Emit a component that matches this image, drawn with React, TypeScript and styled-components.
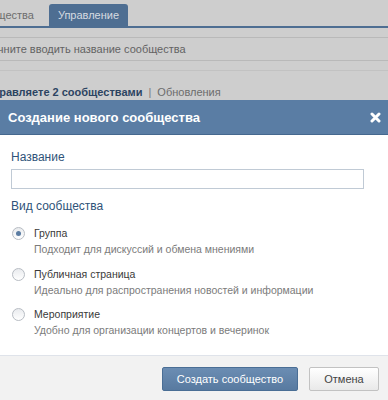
import React from "react";
import styled, { createGlobalStyle } from "styled-components";

const GlobalStyle = createGlobalStyle`
  html, body {
    margin: 0;
    padding: 0;
    background: #cecece;
  }
  body {
    font-family: "Liberation Sans", Arial, sans-serif;
    width: 388px;
    height: 400px;
    overflow: hidden;
  }
`;

const Screen = styled.div`
  display: flex;
  flex-direction: column;
  width: 388px;
  height: 400px;
  overflow: hidden;
  background: #cecece;
`;

// dimmed page that lies under the box, scrolled a bit to the left
const Backdrop = styled.div`
  display: flex;
  flex-direction: column;
  height: 100px;
  overflow: hidden;
  flex-shrink: 0;
`;

const Tabs = styled.div`
  display: flex;
  align-items: flex-end;
  height: 22px;
  padding: 4px 0 0 0;
  border-bottom: 2px solid #4e6e92;
`;

const Tab = styled.div<{ $active?: boolean; $shift?: number }>`
  display: flex;
  align-items: center;
  height: 100%;
  padding: 0 9px;
  margin-left: ${p => p.$shift ?? 0}px;
  white-space: nowrap;

  font-size: 11px;
  color: ${p => (p.$active ? "#d6dbe1" : "#6d6d6d")};
  border-radius: 3px 3px 0 0;
  background: ${p => (p.$active ? "#4e6e92" : "transparent")};
`;

const SearchRow = styled.div`
  display: flex;
  align-items: center;
  height: 22px;
  margin-top: 9px;

  font-size: 11px;
  color: #636363;
  white-space: nowrap;
  border-top: 1px solid #b9b9b9;
  border-bottom: 1px solid #b9b9b9;

  span {
    margin-left: -16px;
  }
`;

const Divider = styled.div`
  height: 9px;
  border-bottom: 1px solid #c2c2c2;
`;

const Summary = styled.div`
  display: flex;
  align-items: center;
  gap: 6px;
  margin: 15px 0 0 -34px;
  white-space: nowrap;

  font-size: 11px;
  color: #6c6c6c;

  b {
    color: #2c4461;
  }
`;

const Sep = styled.span`
  color: #7a7a7a;
`;

const Modal = styled.div`
  display: flex;
  flex-direction: column;
  flex: 1;
  background: #fff;
`;

const ModalHeader = styled.div`
  display: flex;
  align-items: center;
  justify-content: space-between;
  height: 34px;
  padding: 0 7px 0 8px;

  background: #5a7da4;
  border-bottom: 1px solid #45688e;
`;

const ModalTitle = styled.div`
  font-size: 13px;
  font-weight: 700;
  color: #fff;
`;

const Close = styled.div`
  display: flex;
  align-items: center;
  justify-content: center;
  width: 12px;
  height: 12px;
  cursor: pointer;
`;

const ModalBody = styled.div`
  display: flex;
  flex-direction: column;
  flex: 1;
  padding: 15px 24px 0 11px;
`;

const FieldLabel = styled.div<{ $top?: number }>`
  margin-top: ${p => p.$top ?? 0}px;
  font-size: 12px;
  color: #2f5379;
`;

const TextInput = styled.input`
  box-sizing: border-box;
  width: 353px;
  height: 20px;
  margin-top: 5px;
  padding: 2px 4px;

  border: 1px solid #c0cad5;
  outline: none;
  font-family: inherit;
  font-size: 11px;
`;

const Options = styled.div`
  display: flex;
  flex-direction: column;
  gap: 10.5px;
  margin-top: 13px;
`;

const Option = styled.label`
  display: grid;
  grid-template-columns: 14px 1fr;
  column-gap: 8px;
  row-gap: 3px;
  padding-left: 1px;
  cursor: pointer;
`;

const Radio = styled.span<{ $checked?: boolean }>`
  display: flex;
  align-items: center;
  justify-content: center;
  box-sizing: border-box;
  width: 13px;
  height: 13px;
  margin-top: 1px;

  border: 1px solid #b7bcc3;
  border-radius: 50%;
  background: linear-gradient(#e9ebee, #ffffff);

  &::after {
    content: "";
    display: ${p => (p.$checked ? "block" : "none")};
    width: 5px;
    height: 5px;
    border-radius: 50%;
    background: #5b7ca2;
  }
`;

const OptionTitle = styled.div`
  font-size: 10.5px;
  line-height: 14px;
  color: #3a3a3a;
`;

const OptionDesc = styled.div`
  grid-column: 2;
  font-size: 10.5px;
  line-height: 13px;
  color: #7b7b7b;
`;

const Footer = styled.div`
  display: flex;
  justify-content: flex-end;
  gap: 11px;
  height: 45px;
  padding: 11px 9px 0 0;
  box-sizing: border-box;

  background: #f2f2f2;
  border-top: 1px solid #dfe3ea;
`;

const Button = styled.button<{ $primary?: boolean }>`
  box-sizing: border-box;
  width: ${p => (p.$primary ? "136px" : "70px")};
  height: 24px;
  padding: 0;

  font-family: inherit;
  font-size: 11px;
  color: ${p => (p.$primary ? "#fff" : "#444")};
  border: 1px solid ${p => (p.$primary ? "#4a6e95" : "#c2c2c2")};
  border-radius: 2px;
  background: ${p =>
    p.$primary
      ? "linear-gradient(#6b8db3, #587aa0)"
      : "linear-gradient(#ffffff, #e9e9e9)"};
  cursor: pointer;
`;

const options = [
  { title: "Группа", desc: "Подходит для дискуссий и обмена мнениями", checked: true },
  { title: "Публичная страница", desc: "Идеально для распространения новостей и информации" },
  { title: "Мероприятие", desc: "Удобно для организации концертов и вечеринок" },
];

export default function App() {
  return (
    <Screen>
      <GlobalStyle />
      <Backdrop>
        <Tabs>
          <Tab $shift={-39}>Сообщества</Tab>
          <Tab $active $shift={6}>Управление</Tab>
        </Tabs>
        <SearchRow>
          <span>Начните вводить название сообщества</span>
        </SearchRow>
        <Divider />
        <Summary>
          <b>Вы управляете 2 сообществами</b>
          <Sep>|</Sep>
          <span>Обновления</span>
        </Summary>
      </Backdrop>
      <Modal>
        <ModalHeader>
          <ModalTitle>Создание нового сообщества</ModalTitle>
          <Close>
            <svg width="11" height="11" viewBox="0 0 11 11">
              <path d="M2 2 L9 9 M9 2 L2 9" stroke="#fff" strokeWidth="3" strokeLinecap="round" />
            </svg>
          </Close>
        </ModalHeader>
        <ModalBody>
          <FieldLabel>Название</FieldLabel>
          <TextInput type="text" />
          <FieldLabel $top={10}>Вид сообщества</FieldLabel>
          <Options>
            {options.map(o => (
              <Option key={o.title}>
                <Radio $checked={o.checked} />
                <OptionTitle>{o.title}</OptionTitle>
                <OptionDesc>{o.desc}</OptionDesc>
              </Option>
            ))}
          </Options>
        </ModalBody>
        <Footer>
          <Button $primary>Создать сообщество</Button>
          <Button>Отмена</Button>
        </Footer>
      </Modal>
    </Screen>
  );
}
